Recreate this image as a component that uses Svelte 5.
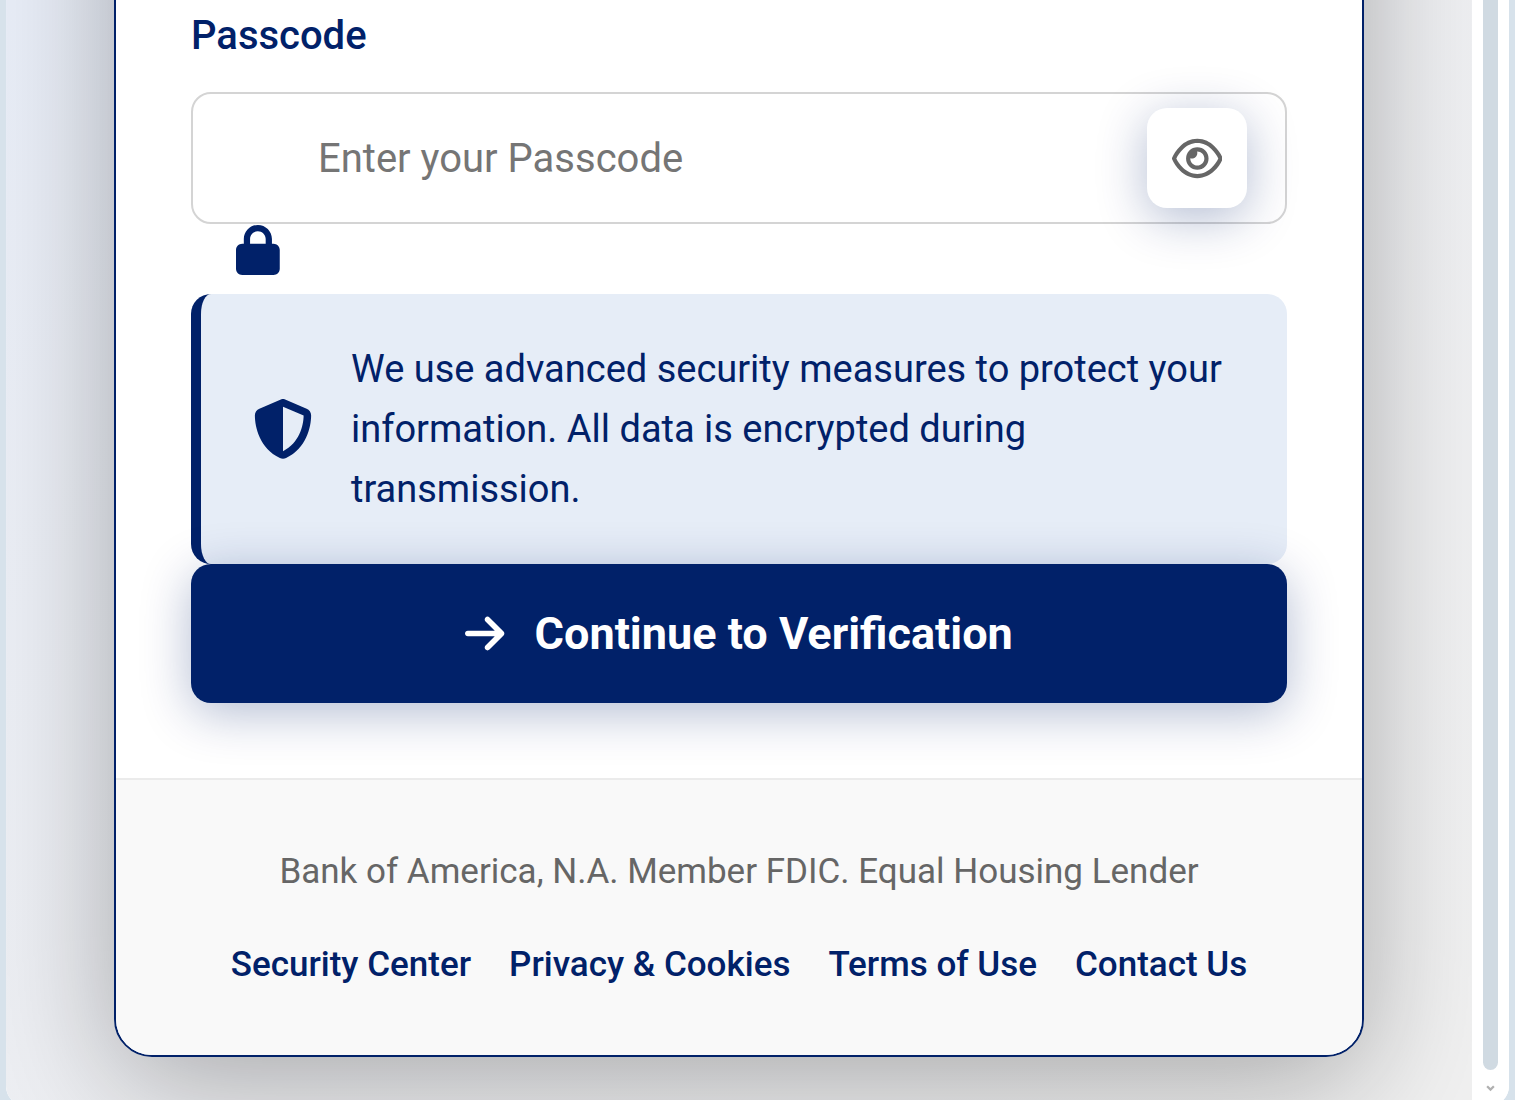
<script lang="ts">
  const links = ["Security Center", "Privacy & Cookies", "Terms of Use", "Contact Us"];

  let passcode = $state("");
  let visible = $state(false);
</script>

<div class="frame">
  <div class="window">
    <main class="page">
      <div class="card">
        <form class="body" onsubmit={(e) => e.preventDefault()}>
          <label for="passcode">Passcode</label>
          <div class="field">
            <input
              id="passcode"
              type={visible ? "text" : "password"}
              placeholder="Enter your Passcode"
              autocomplete="off"
              bind:value={passcode}
            />
            <button
              type="button"
              class="toggle"
              aria-label="Show passcode"
              onclick={() => (visible = !visible)}
            >
              <svg viewBox="0 0 576 512" aria-hidden="true">
                <path d="M288 80c-65.2 0-118.8 29.6-159.9 67.7C89.6 183.5 63 226 49.4 256c13.6 30 40.2 72.5 78.6 108.3C169.2 402.4 222.8 432 288 432s118.8-29.6 159.9-67.7C486.4 328.5 513 286 526.6 256c-13.6-30-40.2-72.5-78.6-108.3C406.8 109.6 353.2 80 288 80zM95.4 112.6C142.5 68.8 207.2 32 288 32s145.5 36.8 192.6 80.6c46.8 43.5 78.1 95.4 93 131.1c3.3 7.9 3.3 16.7 0 24.6c-14.9 35.7-46.2 87.7-93 131.1C433.5 443.2 368.8 480 288 480s-145.5-36.8-192.6-80.6C48.6 356 17.3 304 2.5 268.3c-3.3-7.9-3.3-16.7 0-24.6C17.3 208 48.6 156 95.4 112.6zM288 336c44.2 0 80-35.8 80-80s-35.8-80-80-80c-.7 0-1.3 0-2 0c1.3 5.1 2 10.5 2 16c0 35.3-28.7 64-64 64c-5.5 0-10.9-.7-16-2c0 .7 0 1.3 0 2c0 44.2 35.8 80 80 80zm0-208a128 128 0 1 1 0 256 128 128 0 1 1 0-256z" />
              </svg>
            </button>
          </div>
          <div class="lock">
            <svg viewBox="0 0 448 512" aria-hidden="true">
              <path d="M144 144v48H304V144c0-44.2-35.8-80-80-80s-80 35.8-80 80zM80 192V144C80 64.5 144.5 0 224 0s144 64.5 144 144v48h16c35.3 0 64 28.7 64 64V448c0 35.3-28.7 64-64 64H64c-35.3 0-64-28.7-64-64V256c0-35.3 28.7-64 64-64H80z" />
            </svg>
          </div>

          <div class="notice">
            <svg viewBox="0 0 512 512" aria-hidden="true">
              <path d="M256 0c4.6 0 9.2 1 13.4 2.9L457.7 82.8c22 9.3 38.4 31 38.3 57.2c-.5 99.2-41.3 280.7-213.6 363.2c-16.7 8-36.1 8-52.8 0C57.3 420.7 16.5 239.2 16 140c-.1-26.2 16.3-47.9 38.3-57.2L242.7 2.9C246.8 1 251.4 0 256 0zm0 66.8V444.8C394 378 431.1 230.1 432 141.4L256 66.8z" />
            </svg>
            <p>
              We use advanced security measures to protect your information. All data is encrypted
              during transmission.
            </p>
          </div>

          <button type="submit" class="continue">
            <svg viewBox="0 0 448 512" aria-hidden="true">
              <path d="M438.6 278.6c12.5-12.5 12.5-32.8 0-45.3l-160-160c-12.5-12.5-32.8-12.5-45.3 0s-12.5 32.8 0 45.3L338.8 224 32 224c-17.7 0-32 14.3-32 32s14.3 32 32 32l306.7 0L233.4 393.4c-12.5 12.5-12.5 32.8 0 45.3s32.8 12.5 45.3 0l160-160z" />
            </svg>
            <span>Continue to Verification</span>
          </button>
        </form>

        <footer>
          <p>Bank of America, N.A. Member FDIC. Equal Housing Lender</p>
          <nav>
            {#each links as link}
              <a href="#top">{link}</a>
            {/each}
          </nav>
        </footer>
      </div>
    </main>

    <div class="scrollbar">
      <div class="thumb"></div>
      <svg viewBox="0 0 8 6" aria-hidden="true">
        <path d="M1 1l3 3 3-3" />
      </svg>
    </div>
  </div>
</div>

<style>
  :global(body) {
    margin: 0;
  }

  .frame {
    --navy: #012169;
    box-sizing: border-box;
    height: 100vh;
    padding: 0 6px;
    overflow: hidden;
    background: #d7e2eb;
    font-family: Roboto, "Liberation Sans", sans-serif;
    color: var(--navy);
  }

  .window {
    display: flex;
    overflow: hidden;
    border-radius: 0 0 20px 20px;
    background: #fff;
  }

  .page {
    flex: 1;
    padding: 0 108px 49px;
    overflow: hidden;
    background: linear-gradient(135deg, #e8edf7 0%, #eeeff2 50%, #f0f0f0 100%);
  }

  /* the card starts above the visible part of the page */
  .card {
    margin-top: -200px;
    overflow: hidden;
    border: 2px solid var(--navy);
    border-radius: 38px;
    background: #fff;
    box-shadow: 0 25px 125px rgba(0, 0, 0, 0.3);
  }

  .body {
    display: flex;
    flex-direction: column;
    padding: 202px 75px 75px;
  }

  label {
    margin-bottom: 24px;
    font-size: 40px;
    font-weight: 500;
    line-height: 64px;
  }

  .field {
    position: relative;
  }

  input {
    box-sizing: border-box;
    display: block;
    width: 100%;
    height: 132px;
    padding: 0 150px 0 125px;
    border: 2px solid #d4d4d4;
    border-radius: 20px;
    outline: none;
    background: #fff;
    color: #333;
    font-family: inherit;
    font-size: 40px;
  }

  input::placeholder {
    color: #757575;
    opacity: 1;
  }

  svg {
    display: block;
    flex: none;
    fill: currentColor;
  }

  .toggle {
    position: absolute;
    top: 16px;
    right: 40px;
    display: grid;
    place-items: center;
    width: 100px;
    height: 100px;
    padding: 0;
    border: 0;
    border-radius: 20px;
    background: #fff;
    color: #666;
    box-shadow: 0 10px 50px rgba(1, 33, 105, 0.3);
    cursor: pointer;
  }

  .toggle svg {
    height: 45px;
  }

  .lock {
    padding: 1px 45px 19px;
  }

  .lock svg {
    height: 50px;
  }

  .notice {
    display: flex;
    align-items: center;
    gap: 38px;
    padding: 45px 52px;
    border-left: 10px solid var(--navy);
    border-radius: 20px;
    background: #e6edf7;
    font-size: 38px;
    line-height: 60px;
  }

  .notice svg {
    height: 60px;
  }

  p {
    margin: 0;
  }

  .continue {
    display: flex;
    align-items: center;
    justify-content: center;
    gap: 30px;
    padding: 35px;
    border: 0;
    border-radius: 20px;
    background: var(--navy);
    color: #fff;
    font-family: inherit;
    font-size: 45px;
    font-weight: 700;
    line-height: 69px;
    box-shadow: 0 10px 50px rgba(1, 33, 105, 0.3);
    cursor: pointer;
  }

  .continue svg {
    height: 45px;
  }

  footer {
    padding: 64px 75px 62px;
    border-top: 2px solid #ebebeb;
    background: #f9f9f9;
    color: #666;
    font-size: 35px;
    line-height: 56px;
    text-align: center;
  }

  nav {
    display: flex;
    flex-wrap: wrap;
    justify-content: center;
    gap: 38px;
    margin-top: 37px;
  }

  a {
    color: var(--navy);
    font-weight: 500;
    text-decoration: none;
  }

  .scrollbar {
    display: flex;
    flex-direction: column;
    align-items: center;
    gap: 15px;
    width: 37px;
    padding-bottom: 14px;
    background: #fff;
  }

  .thumb {
    flex: 1;
    width: 15px;
    border-radius: 0 0 8px 8px;
    background: #d0dae2;
  }

  .scrollbar svg {
    width: 9px;
    height: 7px;
    fill: none;
    stroke: #b0b0b0;
    stroke-width: 2;
  }
</style>
